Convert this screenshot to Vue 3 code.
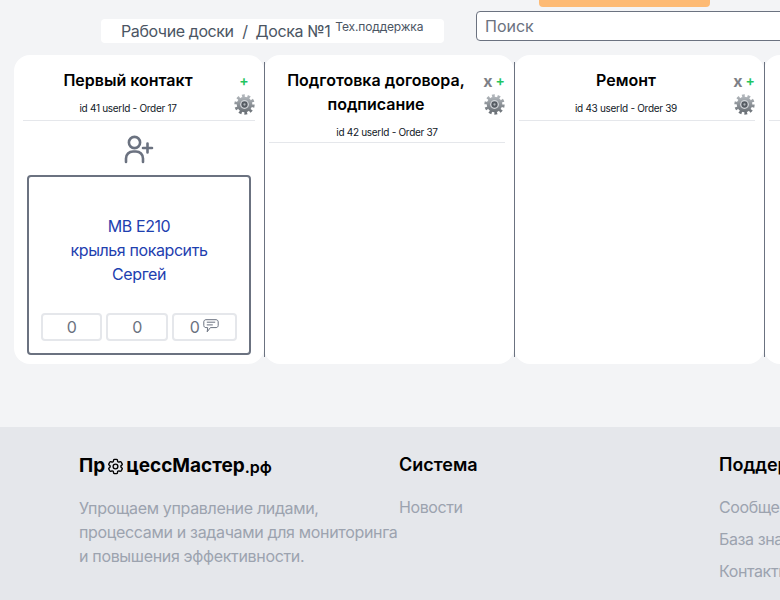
<template>
  <div class="page">
    <header class="topbar">
      <div class="crumbs">
        <span class="crumb">Рабочие доски</span>
        <span class="sep">/</span>
        <span class="crumb">Доска №1</span>
        <sup class="team">Тех.поддержка</sup>
      </div>
      <div class="search-wrap">
        <div class="orange-btn"></div>
        <input class="search" type="text" placeholder="Поиск" />
      </div>
    </header>

    <main class="board">
      <section v-for="col in columns" :key="col.id" class="column">
        <div class="col-head">
          <div class="col-actions">
            <div class="action-row">
              <span v-if="col.removable" class="act-x">x</span>
              <span class="act-plus">+</span>
            </div>
            <svg class="gear" viewBox="0 0 20 20" aria-hidden="true">
              <defs>
                <linearGradient :id="`gear-${col.id}`" x1="0" y1="0" x2="0" y2="1">
                  <stop offset="0" stop-color="#b0b5ba" />
                  <stop offset="1" stop-color="#6a7076" />
                </linearGradient>
              </defs>
              <circle cx="10" cy="10" r="8.2" fill="none" :stroke="`url(#gear-${col.id})`" stroke-width="3" stroke-dasharray="2.6 2.55" />
              <circle cx="10" cy="10" r="7.4" :fill="`url(#gear-${col.id})`" />
              <circle cx="10" cy="10" r="4.2" fill="#d3d6da" />
              <circle cx="10" cy="10" r="3" fill="#555b62" />
              <circle cx="10" cy="10" r="1.1" fill="#aeb3b8" />
            </svg>
          </div>
          <h2 class="col-title">{{ col.title }}</h2>
          <p class="col-meta">{{ col.meta }}</p>
        </div>

        <template v-if="col.cards.length">
          <div class="add-lead">
            <svg viewBox="0 0 30 30" width="30" height="30" fill="none" stroke="#6b7280" stroke-width="2.6" stroke-linecap="round">
              <circle cx="10.5" cy="7.5" r="5.6" />
              <path d="M2 27v-3.5c0-4 3-7 7-7h3c4 0 7 3 7 7V27" />
              <path d="M23.5 8.5v9M19 13h9" />
            </svg>
          </div>
          <article v-for="card in col.cards" :key="card.car" class="card">
            <div class="card-text">
              <div>{{ card.car }}</div>
              <div>{{ card.job }}</div>
              <div>{{ card.person }}</div>
            </div>
            <div class="stats">
              <div class="stat">0</div>
              <div class="stat">0</div>
              <div class="stat">
                0
                <svg class="comment" viewBox="0 0 16 14" width="16" height="14" fill="none" stroke="#6b7280" stroke-width="1" stroke-linejoin="round">
                  <path d="M3 .7h10c1.2 0 2.2.9 2.2 2.1v3.7c0 1.2-1 2.1-2.2 2.1H7.4L4.2 12.8l.5-4.2H3C1.8 8.6.8 7.7.8 6.5V2.8C.8 1.6 1.8.7 3 .7Z" />
                  <path d="M3.8 3.2h8.4M3.8 5.9h6" />
                </svg>
              </div>
            </div>
          </article>
        </template>
      </section>
    </main>

    <footer class="footer">
      <div class="foot-col">
        <div class="logo"><span>Пр</span><svg class="logo-gear" viewBox="0 0 24 24" width="19" height="19" fill="none" stroke="#000" stroke-width="1.7" stroke-linejoin="round">
            <path d="M9.594 3.94c.09-.542.56-.94 1.11-.94h2.593c.55 0 1.02.398 1.11.94l.213 1.281c.063.374.313.686.645.87.074.04.147.083.22.127.325.196.72.257 1.075.124l1.217-.456a1.125 1.125 0 0 1 1.37.49l1.296 2.247a1.125 1.125 0 0 1-.26 1.431l-1.003.827c-.293.241-.438.613-.43.992a7.723 7.723 0 0 1 0 .255c-.008.378.137.75.43.991l1.004.827c.424.35.534.955.26 1.43l-1.298 2.247a1.125 1.125 0 0 1-1.369.491l-1.217-.456c-.355-.133-.75-.072-1.076.124a6.47 6.47 0 0 1-.22.128c-.331.183-.581.495-.644.869l-.213 1.281c-.09.543-.56.94-1.11.94h-2.594c-.55 0-1.019-.398-1.11-.94l-.213-1.281c-.062-.374-.312-.686-.644-.87a6.52 6.52 0 0 1-.22-.127c-.325-.196-.72-.257-1.076-.124l-1.217.456a1.125 1.125 0 0 1-1.369-.49l-1.297-2.247a1.125 1.125 0 0 1 .26-1.431l1.004-.827c.292-.24.437-.613.43-.991a6.932 6.932 0 0 1 0-.255c.007-.38-.138-.751-.43-.992l-1.004-.827a1.125 1.125 0 0 1-.26-1.43l1.297-2.247a1.125 1.125 0 0 1 1.37-.491l1.216.456c.356.133.751.072 1.076-.124.072-.044.146-.086.22-.128.332-.183.582-.495.644-.869l.214-1.28Z" />
            <path d="M15 12a3 3 0 1 1-6 0 3 3 0 0 1 6 0Z" />
          </svg><span>цессМастер</span><span class="logo-tld">.рф</span></div>
        <p class="foot-desc">Упрощаем управление лидами, процессами и задачами для мониторинга и повышения эффективности.</p>
      </div>
      <div class="foot-col">
        <h3 class="foot-title">Система</h3>
        <a class="foot-link">Новости</a>
      </div>
      <div class="foot-col">
        <h3 class="foot-title">Поддержка</h3>
        <a class="foot-link">Сообщество</a>
        <a class="foot-link">База знаний</a>
        <a class="foot-link">Контакты</a>
      </div>
    </footer>
  </div>
</template>

<script setup>
const columns = [
  {
    id: 41,
    title: 'Первый контакт',
    meta: 'id 41 userId - Order 17',
    removable: false,
    cards: [{ car: 'MB E210', job: 'крылья покарсить', person: 'Сергей' }],
  },
  { id: 42, title: 'Подготовка договора, подписание', meta: 'id 42 userId - Order 37', removable: true, cards: [] },
  { id: 43, title: 'Ремонт', meta: 'id 43 userId - Order 39', removable: true, cards: [] },
  { id: 44, title: '\u00a0', meta: '\u00a0', removable: true, cards: [] },
]
</script>

<style>
html,
body {
  margin: 0;
  overflow: hidden;
  background: #f3f4f6;
}
</style>

<style scoped>
.page {
  width: 780px;
  height: 600px;
  overflow: hidden;
  background: #f3f4f6;
  font-family: Inter, "Noto Sans", sans-serif;
  font-size: 16px;
  line-height: 24px;
  letter-spacing: -0.4px;
  color: #000;
  -webkit-font-smoothing: antialiased;
}

.topbar {
  display: flex;
  align-items: flex-start;
  height: 55px;
  padding-left: 101px;
  box-sizing: border-box;
}

.crumbs {
  flex: none;
  display: flex;
  align-items: center;
  width: 343px;
  height: 24px;
  margin-top: 19px;
  padding: 0 20px;
  box-sizing: border-box;
  background: #fff;
  border-radius: 4px;
  color: #4b5563;
  white-space: nowrap;
}

.sep {
  margin: 0 8px 0 8.5px;
}

.team {
  margin-left: 5px;
  font-size: 12px;
  line-height: 16px;
  letter-spacing: -0.15px;
  align-self: flex-start;
  vertical-align: baseline;
}

.search-wrap {
  flex: none;
  width: 400px;
  margin-left: 32px;
}

.orange-btn {
  width: 171px;
  height: 7px;
  margin-left: 63px;
  background: #fdba74;
  border-radius: 0 0 4px 4px;
}

.search {
  display: block;
  width: 100%;
  height: 30px;
  margin-top: 4px;
  padding: 0 8px;
  box-sizing: border-box;
  border: 1px solid #6b7280;
  border-radius: 4px;
  background: #fff;
  font: inherit;
  letter-spacing: 0;
  outline: none;
}

.search::placeholder {
  color: #6b7280;
  opacity: 1;
}

.board {
  display: flex;
  height: 309px;
  padding-left: 14px;
  overflow: hidden;
}

.column {
  position: relative;
  flex: none;
  width: 250px;
  box-sizing: border-box;
  padding: 13px 9px 9px 5px;
  background: #fff;
  border-radius: 16px;
}

/* straight divider between the rounded columns */
.column::before {
  content: "";
  position: absolute;
  left: 0;
  top: 7px;
  bottom: 7px;
  width: 1px;
  background: #6b7280;
}

.column:first-child {
  padding-left: 9px;
}

.column:first-child::before {
  display: none;
}

.col-head {
  display: flow-root;
  min-height: 53px;
  box-sizing: border-box;
  padding-bottom: 2px;
  border-bottom: 1px solid #e5e7eb;
  text-align: center;
}

.col-title {
  margin: 0;
  font-size: 16px;
  line-height: 24px;
  font-weight: 600;
  letter-spacing: 0;
}

.col-meta {
  margin: 8px 0 0;
  font-size: 10px;
  line-height: 16px;
  letter-spacing: -0.3px;
  color: #111827;
}

/* floated: the title and a short meta line wrap beside it */
.col-actions {
  float: right;
  width: 22px;
  height: 47px;
  text-align: center;
}

.action-row {
  display: flex;
  justify-content: center;
  align-items: center;
  gap: 3px;
  height: 26px;
  white-space: nowrap;
  letter-spacing: 0;
}

.act-x {
  font-size: 16px;
  font-weight: 700;
  color: #7d8087;
}

.act-plus {
  font-size: 14px;
  font-weight: 600;
  color: #22c55e;
}

.gear {
  display: block;
  width: 21px;
  height: 21px;
  margin: 0 auto;
}

.add-lead {
  display: flex;
  justify-content: center;
  padding-top: 14px;
  height: 54px;
  box-sizing: border-box;
}

.card {
  margin: 0 4px;
  height: 180px;
  box-sizing: border-box;
  padding: 37px 12px 12px;
  border: 2px solid #6b7280;
  border-radius: 4px;
  display: flex;
  flex-direction: column;
  justify-content: space-between;
}

.card-text {
  text-align: center;
  color: #1e40af;
}

.stats {
  display: grid;
  grid-template-columns: 61px 62px 65px;
  gap: 4px;
}

.stat {
  display: flex;
  align-items: center;
  justify-content: center;
  gap: 4px;
  height: 28px;
  box-sizing: border-box;
  border: 2px solid #e5e7eb;
  border-radius: 4px;
  color: #6b7280;
}

.comment {
  margin-top: -2px;
}

.footer {
  display: grid;
  grid-template-columns: 320px 320px 320px;
  width: 1039px;
  height: 173px;
  margin-top: 63px;
  padding: 24px 0 0 79px;
  box-sizing: border-box;
  background: #e5e7eb;
}

.foot-col {
  display: flex;
  flex-direction: column;
  align-items: flex-start;
}

.logo {
  display: flex;
  align-items: center;
  font-size: 19px;
  line-height: 28px;
  font-weight: 700;
  letter-spacing: 0;
  white-space: nowrap;
}

.logo-gear {
  margin: 1px 1px 0 1px;
}

.logo-tld {
  font-size: 16px;
  line-height: 28px;
  font-weight: 600;
  padding-top: 2px;
}

.foot-desc {
  margin: 15px 0 0;
  width: 320px;
  letter-spacing: -0.33px;
  color: #9ca3af;
}

.foot-title {
  margin: 0 0 16px;
  font-size: 18px;
  line-height: 28px;
  font-weight: 600;
  letter-spacing: 0;
}

.foot-link {
  color: #9ca3af;
  margin-bottom: 8px;
}
</style>
